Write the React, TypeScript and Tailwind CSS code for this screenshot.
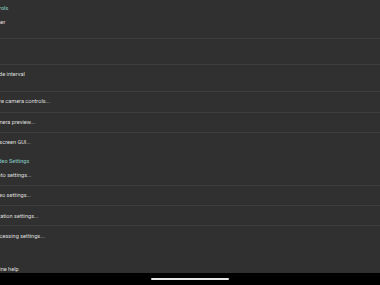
import React from "react";

type Row = {
  h: number;
  pt?: number;
  text?: string;
  header?: boolean;
  border?: boolean;
};

const rows: Row[] = [
  { h: 14, pt: 5, text: "Camera Controls", header: true },
  { h: 25, pt: 5, text: "Timer", border: true },
  { h: 26, border: true },
  { h: 27, pt: 6, text: "Mode interval", border: true },
  { h: 21, pt: 6, text: "More camera controls...", border: true },
  { h: 20, pt: 6, text: "Camera preview...", border: true },
  { h: 19, pt: 6, text: "On screen GUI..." },
  { h: 15, pt: 6, text: "Photo and Video Settings", header: true },
  { h: 19, pt: 5, text: "Photo settings...", border: true },
  { h: 20, pt: 6, text: "Video settings...", border: true },
  { h: 20, pt: 7, text: "Location settings...", border: true },
  { h: 20, pt: 7, text: "Processing settings..." },
  { h: 13 },
];

function RowView({ r }: { r: Row }) {
  const cls =
    "shrink-0 overflow-hidden whitespace-nowrap " +
    (r.border ? "border-b border-[#3d3d3d]" : "");
  return (
    <div className={cls} style={{ height: r.h, paddingTop: r.pt ?? 0 }}>
      {r.text ? (
        r.header ? (
          <div className="ml-[-33px] text-[5.5px] leading-[6px] font-medium text-[#7fbdb4]">
            {r.text}
          </div>
        ) : (
          <div className="ml-[-9px] text-[5.6px] leading-[6px] text-[#dedede]">
            {r.text}
          </div>
        )
      ) : null}
    </div>
  );
}

export default function App() {
  return (
    <div
      className="w-[380px] h-[285px] flex flex-col bg-[#303030] overflow-hidden"
      style={{ fontFamily: "Roboto, 'Noto Sans', sans-serif" }}
    >
      <div className="flex-1 flex flex-col overflow-hidden">
        {rows.map((r, i) => (
          <RowView key={i} r={r} />
        ))}
        <div className="flex-1 overflow-hidden whitespace-nowrap pt-[7px]">
          <div className="ml-[-9px] text-[5.6px] leading-[6px] text-[#dedede]">
            Online help
          </div>
        </div>
      </div>
      <div className="h-[12px] shrink-0 bg-black pt-[5px]">
        <div className="mx-auto w-[78px] h-[2px] rounded-full bg-[#e6e6e6]" />
      </div>
    </div>
  );
}
